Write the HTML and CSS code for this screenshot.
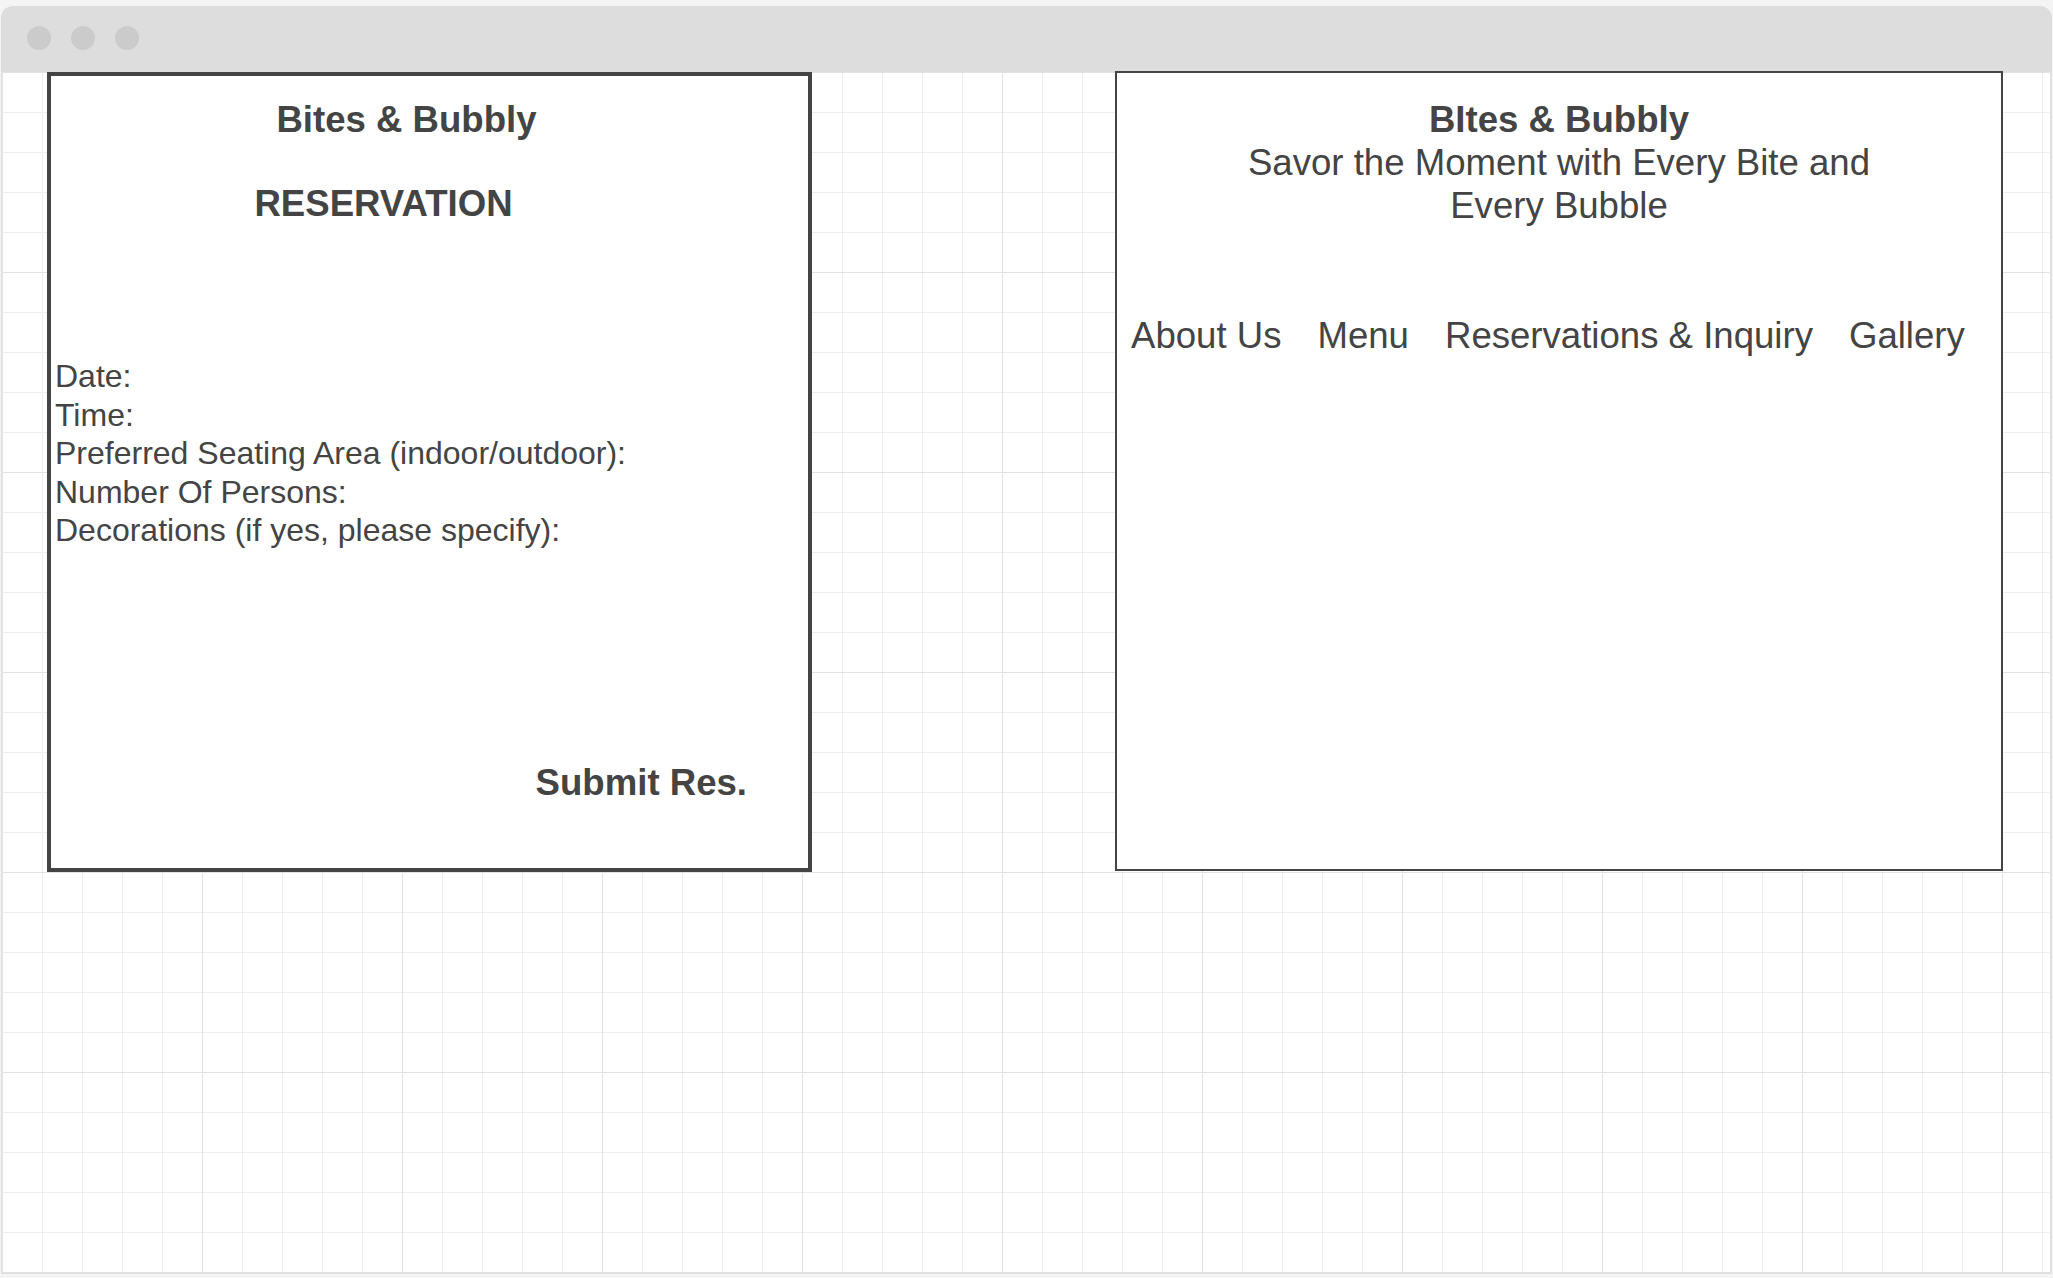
FILE: index.html
```html
<!DOCTYPE html>
<html lang="en">
<head>
  <meta charset="UTF-8" />
  <meta name="viewport" content="width=device-width, initial-scale=1.0" />
  <title>Bites &amp; Bubbly - Wireframe</title>
  <link rel="stylesheet" href="styles.css">
</head>
<body>
  <div class="window">
    <div class="titlebar">
      <span class="dot"></span>
      <span class="dot"></span>
      <span class="dot"></span>
    </div>

    <div class="canvas">
      <div class="card res-card">
        <h1 class="brand">Bites &amp; Bubbly</h1>
        <h2 class="res-title">RESERVATION</h2>
        <div class="fields">
          <p>Date:</p>
          <p>Time:</p>
          <p>Preferred Seating Area (indoor/outdoor):</p>
          <p>Number Of Persons:</p>
          <p>Decorations (if yes, please specify):</p>
        </div>
        <div class="submit">Submit Res.</div>
      </div>

      <div class="card home-card">
        <h1 class="home-brand">BItes &amp; Bubbly</h1>
        <p class="tagline">Savor the Moment with Every Bite and Every Bubble</p>
        <nav class="nav">
          <a href="#">About Us</a>
          <a href="#">Menu</a>
          <a href="#">Reservations &amp; Inquiry</a>
          <a href="#">Gallery</a>
        </nav>
      </div>
    </div>
  </div>
</body>
</html>
```

FILE: styles.css
```css
* { box-sizing: border-box; }
body {
  margin: 0;
  background: #f4f4f4;
  font-family: "Liberation Sans", Arial, sans-serif;
  color: #444;
}
.window {
  margin: 6px 0 0 1px;
  width: 2051px;
}
.titlebar {
  height: 66px;
  background: #dddddd;
  border-radius: 12px 12px 0 0;
  display: flex;
  align-items: center;
  gap: 20px;
  padding: 0 0 2px 26px;
}
.dot {
  width: 24px;
  height: 24px;
  border-radius: 50%;
  background: #cbcbcb;
}
.canvas {
  height: 1202px;
  border: 2px solid #e0e0e0;
  border-top: none;
  border-left-width: 1px;
  background-color: #fff;
  background-image:
    linear-gradient(to right, #e2e2e2 1px, transparent 1px),
    linear-gradient(to bottom, #e2e2e2 1px, transparent 1px),
    linear-gradient(to right, #eeeeee 1px, transparent 1px),
    linear-gradient(to bottom, #eeeeee 1px, transparent 1px);
  background-size: 200px 200px, 200px 200px, 40px 40px, 40px 40px;
  display: flex;
  align-items: flex-start;
  gap: 303px;
  padding-left: 45px;
}
.card {
  background: #fff;
  border: 2px solid #444;
  height: 800px;
}
.res-card {
  width: 765px;
  border-width: 4px;
  padding-top: 22px;
}
h1, h2, p { margin: 0; }
.brand, .res-title, .home-brand, .submit {
  font-size: 36.6px;
  font-weight: bold;
  line-height: 43.2px;
  text-align: center;
}
.brand { padding-right: 46px; }
.res-title {
  margin-top: 41px;
  padding-right: 92px;
}
.fields {
  margin-top: 132px;
  padding-left: 4px;
}
.fields p {
  font-size: 32px;
  line-height: 1.2;
}
.submit {
  margin-top: 212px;
  text-align: right;
  padding-right: 61px;
}
.home-card {
  width: 888px;
  margin-top: -1px;
  padding-top: 25px;
}
.tagline {
  font-size: 36.6px;
  line-height: 43.2px;
  text-align: center;
  max-width: 690px;
  margin: 0 auto;
}
.nav {
  display: flex;
  gap: 36px;
  margin-top: 86px;
  padding-left: 14px;
}
.nav a {
  font-size: 36.6px;
  line-height: 43.2px;
  color: #444;
  text-decoration: none;
}
```
